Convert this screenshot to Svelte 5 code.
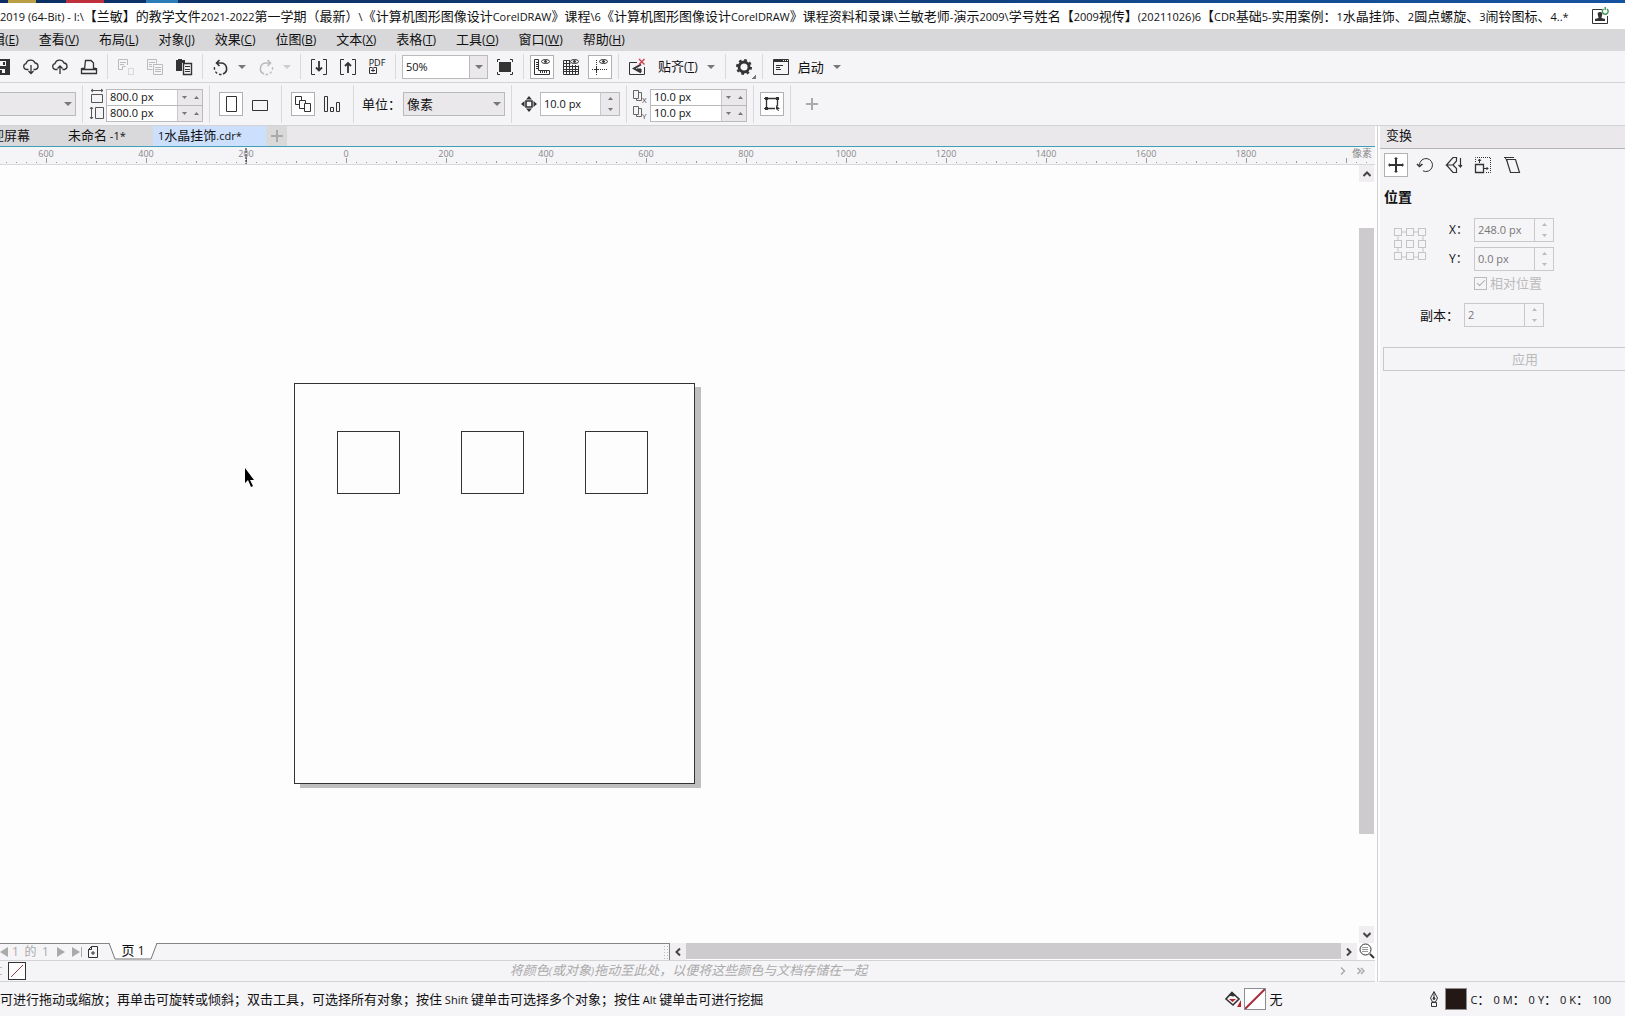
<script>
  const title =
    "2019 (64-Bit) - I:\\【兰敏】的教学文件2021-2022第一学期（最新）\\《计算机图形图像设计CorelDRAW》课程\\6《计算机图形图像设计CorelDRAW》课程资料和录课\\兰敏老师-演示2009\\学号姓名【2009视传】(20211026)6【CDR基础5-实用案例：1水晶挂饰、2圆点螺旋、3闹铃图标、4..*";

  const menus = [
    ["编辑", "E"],
    ["查看", "V"],
    ["布局", "L"],
    ["对象", "J"],
    ["效果", "C"],
    ["位图", "B"],
    ["文本", "X"],
    ["表格", "T"],
    ["工具", "O"],
    ["窗口", "W"],
    ["帮助", "H"]
  ];

  // every icon lives on a 16x16 grid
  const icons = {
    save: '<path fill="currentColor" stroke="none" d="M0 0h16v16H0z"/><path stroke="none" fill="#f5f4f7" d="M4 2h8v5H4zM5 10h6v4H5z"/><path stroke="none" fill="currentColor" d="M9 3h2v3H9zM6 11h2v3H6z"/>',
    cloudDown:
      '<path d="M5.5 10.5H3.5a3 3 0 0 1-.5-5.9A4.8 4.8 0 0 1 12 4a3.3 3.3 0 0 1 .5 6.500H10.500M8 6v8.500M5.500 12 8 14.500 10.500 12" stroke-width="1.3"/>',
    cloudUp:
      '<path d="M5.500 10.500H3.500a3 3 0 0 1-.5-5.900A4.800 4.800 0 0 1 12 4a3.300 3.300 0 0 1 .5 6.500H10.500M8 15V7M5.500 9.500 8 7 10.500 9.500" stroke-width="1.3"/>',
    print:
      '<path d="M3.500 10.500 4.500 1.500h5.500l2.500 2.500v6.500M.5 9v5.500h15V9M.5 10.500h15M1 9.500h2M13 9.500h2" stroke-width="1.3"/>',
    cut: '<path d="M9.500 6V.5h-9v10h4v-3h3M2 3.500h6M2 5.500h4"/><path stroke-dasharray="1 1" d="M10.500 9.500h5v6h-5z"/>',
    copy: '<path d="M5.500 10.500h-5V.5h9v4M2 3.500h6M2 5.500h3M2 7.500h3M6.500 5.500h9v10h-9zM8 8.500h6M8 10.500h6M8 12.500h6"/>',
    paste:
      '<path fill="currentColor" stroke="none" d="M0 1h2V0h4v1h3v3H6v8H0z"/><path fill="#f5f4f7" stroke-width="1.400" d="M7.500 4.500h8v11h-8z"/><path d="M9 7.500h5M9 10.500h5M9 12.500h5"/>',
    undo: '<path d="M3.500 4H8a5.700 5.700 0 0 1 2 11M6.500 1l-3 3 3 3" stroke-width="1.600"/><path d="M8.500 15.500A6.500 6.500 0 0 1 1.500 8" stroke-width="1.400" stroke-dasharray="2.500 2"/>',
    redo: '<path d="M12.500 4H8a5.700 5.700 0 0 0-2 11M9.500 1l3 3-3 3" stroke-width="1.600"/><path d="M7.500 15.500A6.500 6.500 0 0 0 14.500 8" stroke-width="1.400" stroke-dasharray="2.500 2"/>',
    import:
      '<path d="M4 .5H.5v15H4M12 .5h3.500v15H12"/><path d="M8 2v10M5 8.500l3 3 3-3" stroke-width="1.800"/>',
    export:
      '<path d="M4 .5H.5v15H4M12 .5h3.500v15H12"/><path d="M8 14V4M5 7l3-3 3 3" stroke-width="1.800"/>',
    full: '<path fill="currentColor" stroke="none" d="M2 3h12v10H2z"/><path d="M3 .5H.5V3M13 .5h2.500V3M3 15.500H.5V13M13 15.500h2.500V13"/>',
    ruler:
      '<path d="M.5.5h4v11h11v4H.5zM2 3.500h2M2 5.500h2M2 7.500h2M2 9.500h2M6.500 12v2M8.500 12v2M10.500 12v2M12.500 12v2"/><ellipse cx="11.500" cy="2.500" rx="4" ry="2"/><circle cx="11.500" cy="2.500" r="1" fill="currentColor"/>',
    grid: '<path d="M.5 1.500v14h15v-9M.5 4.500h7M.5 1.500h6M3.500 1v14M6.500 1v14M9.500 6v9M12.500 6v9M.5 7.500h15M.5 10.500h15M.5 12.500h15"/><ellipse cx="11.500" cy="2.500" rx="4" ry="2"/><circle cx="11.500" cy="2.500" r="1" fill="currentColor"/>',
    guide:
      '<path stroke-dasharray="1 1" d="M4.500 1v15M0 10.500h16"/><path d="M2 10.500h5M4.500 8v5"/><ellipse cx="11.500" cy="2.500" rx="4" ry="2"/><circle cx="11.500" cy="2.500" r="1" fill="currentColor"/>',
    snap: '<path d="M8 3.500H.5v12h15V8" /><path d="M12 5.500 5 9.500l7 4" stroke-width="2"/><path d="M12 10v3l-4-3z" fill="currentColor"/><path stroke="#d33b47" stroke-width="1.400" d="m10 0 5.500 5.500M15.500 0 10 5.500"/>',
    gear: '<circle cx="8" cy="8" r="5" stroke-width="2.800"/><circle cx="8" cy="8" r="7" stroke-width="2" stroke-dasharray="2.700 2.800"/>',
    launch:
      '<path d="M.5.5h15v15H.5z"/><path stroke-width="2" d="M0 2h16"/><path stroke="#f5f4f7" d="M10 1.500h1M12 1.500h1M14 1.500h1"/><path d="M3 6.500h7M3 8.500h4M3 10.500h5"/>',
    widthDim: '<path d="M2 1.500h12M4 0 2 1.500 4 3M12 0l2 1.500L12 3M2.500 5.500h11v8h-11z" stroke="#555"/>',
    heightDim: '<path d="M2.500 2v12M1 4l1.500-2L4 4M1 12l1.500 2L4 12M6.500 2.500h8v11h-8z" stroke="#555"/>',
    portrait: '<path d="M3.500.5h10v15h-10z"/>',
    landscape: '<path d="M.5 4.500h15v10H.5z"/>',
    pages: '<path d="M.5.5h6v8h-6z"/><path fill="#fff" d="M4.500 4.500h6v8h-6z"/><path fill="#fff" d="M9.500 7.500h6v8h-6z"/>',
    bars: '<path d="M.5.5h3v15h-3zM6.500 11.500h3v4h-3zM12.500 6.500h3v9h-3z"/>',
    nudge:
      '<path stroke-width="1.600" d="M5 5h6v6H5z"/><path fill="currentColor" stroke="none" d="M8 0l3 3.500H5zM8 16l3-3.500H5zM0 8l3.500-3v6zM16 8l-3.500-3v6z"/>',
    box: '<path stroke-width="1.300" d="M3 2.500h10M2.500 3v10M13.500 3v7M3 12.500h8"/><path fill="currentColor" stroke="none" d="M1 1h3v3H1zM12 1h3v3h-3zM1 11h3v3H1z"/><path fill="currentColor" stroke="none" d="M12 9l4 4h-2l1 2h-1l-1-2-1 1z"/><path d="M0 2.500h2M0 12.500h2"/>',
    plus: '<path stroke="#aaa" stroke-width="2" d="M8 2v12M2 8h12"/>',
    move: '<path stroke-width="2" d="M8 1v14M1 8h14"/><path fill="currentColor" stroke="none" d="m8 0 2 2H6zM8 16l2-2H6zM0 8l2-2v4zM16 8l-2-2v4z"/>',
    rotate: '<path d="M2.500 8A6.500 6.500 0 1 1 6 13.800"/><path d="M0 7l2.500 2.500L5.500 7" stroke-width="1.600"/>',
    mirror:
      '<path stroke-width="1.200" d="M10.500.5H7L.5 8H7l3.500-4zM.5 8 7 15.500h3.500v-4L7 8M14.500 1v9M12.500 8l2 2 1.500-2"/>',
    scale:
      '<path stroke-width="1.300" d="M.5 7.500h8v8h-8z"/><path stroke-dasharray="1 1" d="M.5 5V.5h15v15H11"/><path d="M4.500 6V2M3 4l1.500-2L6 4M9 11.500h4M11.500 10l1.500 1.500-1.500 1.500"/>',
    skew: '<path stroke-width="1.200" d="M2.500 2.500h9l4 13h-9z"/><path d="M0 .5h10M1 .5l2 3" />',
    addPage: '<path d="M6.500 2.500h6v11h-9v-8zM6.500 2.500v3h-3M8 7v4M6 9h4"/>',
    zoomFit: '<circle cx="6.500" cy="6.500" r="5.500"/><path stroke-dasharray="1 1" d="M3.500 4.500h6M3.500 6.500h6M3.500 8.500h6"/><path stroke-width="2" d="m11 11 4 4"/>',
    fill: '<path stroke-width="1.600" d="M7 1.500 14 8l-6 6L1 8z"/><path fill="currentColor" stroke="none" d="M7 1l4 3.500-3 1-4-1z"/><path stroke="none" fill="#b8232f" d="M4 8h7l-3.500 3zM12 16l4-7v7z"/>',
    pen: '<path d="M8 .5 4.500 7l2 4h3l2-4zM8 1v6M5.500 11.500h5v4h-5z"/><circle cx="8" cy="7.500" r="1" fill="currentColor"/>',
    user: '<path d="M10 1.500H.5v14h15V8"/><path fill="currentColor" stroke="none" d="M8 4c2 0 3 1.500 2 3.500L9.500 10l3.500 1v2H3v-2l3.500-1L6 7.500C5 5.500 6 4 8 4z"/><path stroke="#3e9a55" stroke-width="1.400" d="M11.500 1a2.900 2.900 0 1 0 3.500 0M13.200-1v3"/>'
  };

  // one major tick for each 200 units
  const majors = Array.from({ length: 22 }, (_, i) => ({ x: 46 + i * 100, n: Math.abs(i * 200 - 600) }));
  const minors = Array.from({ length: 220 }, (_, i) => i * 10 + 6);

  let zoom = "50%";
  let units = "像素";
  let pageW = "800.0 px";
  let pageH = "800.0 px";
  let nudge = "10.0 px";
  let dupX = "10.0 px";
  let dupY = "10.0 px";
  let inks = [["C", 0], ["M", 0], ["Y", 0], ["K", 100]];

  // latin letters are set smaller than the chinese ones
  let runs = text => text.match(/[\x20-\x7e]+|[^\x20-\x7e]+/g);
</script>

{#snippet icon(name)}
  <svg class="icon" viewBox="0 0 16 16" aria-hidden="true">{@html icons[name]}</svg>
{/snippet}

{#snippet mixed(text)}
  {#each runs(text) as run}{#if run.charCodeAt(0) < 127}<span class="latin">{run}</span>{:else}{run}{/if}{/each}
{/snippet}

{#snippet tool(name, label, on, off)}
  <button class="tool" class:on disabled={off} aria-label={label}>{@render icon(name)}</button>
{/snippet}

{#snippet caret(off)}
  <button class="caret" disabled={off} aria-label="展开"><svg viewBox="0 0 8 4"><path d="M0 0h8L4 4z" /></svg></button>
{/snippet}

{#snippet up()}
  <button aria-label="增加"><svg viewBox="0 0 5 3"><path d="M0 3h5L2.500 0z" /></svg></button>
{/snippet}

{#snippet down()}
  <button aria-label="减少"><svg viewBox="0 0 5 3"><path d="M0 0h5L2.500 3z" /></svg></button>
{/snippet}

<div class="app">
  <div class="desktop"><i class="yellow"></i><i class="red"></i><i class="blue"></i></div>

  <header class="title">
    <span>{@render mixed(title)}</span>
    <button class="account" aria-label="登录">{@render icon("user")}</button>
  </header>

  <nav class="menu">
    {#each menus as [name, key]}
      <button>{name}<span class="key">(<u>{key}</u>)</span></button>
    {/each}
  </nav>

  <div class="bar standard">
    {@render tool("save", "保存")}
    {@render tool("cloudDown", "下载")}
    {@render tool("cloudUp", "上传")}
    {@render tool("print", "打印")}
    <hr />
    {@render tool("cut", "剪切", false, true)}
    {@render tool("copy", "复制", false, true)}
    {@render tool("paste", "粘贴")}
    <hr />
    <div class="split">{@render tool("undo", "撤消")}{@render caret()}</div>
    <div class="split">{@render tool("redo", "重做", false, true)}{@render caret(true)}</div>
    <hr />
    {@render tool("import", "导入")}
    {@render tool("export", "导出")}
    <button class="tool pdf"><span>PDF</span><svg viewBox="0 0 8 7"><path d="M3 .5H.5v6h7v-6H5M4 5V0M2 3.500h4" /></svg></button>
    <hr />
    <div class="field zoom">
      <input aria-label="缩放级别" bind:value={zoom} />
      {@render caret()}
    </div>
    {@render tool("full", "全屏预览")}
    <hr />
    {@render tool("ruler", "显示标尺", true)}
    {@render tool("grid", "显示网格")}
    {@render tool("guide", "显示辅助线", true)}
    <hr />
    {@render tool("snap", "关闭贴齐")}
    <div class="split">
      <button class="text">贴齐<span class="key">(<u>T</u>)</span></button>{@render caret()}
    </div>
    <hr />
    <div class="gear">{@render tool("gear", "选项")}</div>
    <hr />
    <div class="split">{@render tool("launch", "启动")}<button class="text">启动</button>{@render caret()}</div>
  </div>

  <div class="bar property">
    <div class="drop size">
      <select aria-label="页面大小"><option></option></select>
      <svg viewBox="0 0 8 4"><path d="M0 0h8L4 4z" /></svg>
    </div>
    <hr />
    <div class="pair">
      {@render icon("widthDim")}
      <div class="field"><input aria-label="页面宽度" bind:value={pageW} /><div class="spin side">{@render down()}{@render up()}</div></div>
      {@render icon("heightDim")}
      <div class="field"><input aria-label="页面高度" bind:value={pageH} /><div class="spin side">{@render down()}{@render up()}</div></div>
    </div>
    <hr />
    <div class="group">{@render tool("portrait", "纵向", true)}{@render tool("landscape", "横向")}</div>
    <hr />
    <div class="group">{@render tool("pages", "所有页面", true)}{@render tool("bars", "当前页面")}</div>
    <hr />
    <label class="units">
      <span>单位：</span>
      <div class="drop">
        <select bind:value={units}><option>像素</option><option>毫米</option></select>
        <svg viewBox="0 0 8 4"><path d="M0 0h8L4 4z" /></svg>
      </div>
    </label>
    <hr />
    <div class="nudge">
      {@render icon("nudge")}
      <div class="field"><input aria-label="微调距离" bind:value={nudge} /><div class="spin">{@render up()}{@render down()}</div></div>
    </div>
    <hr />
    <div class="pair">
      <svg class="icon dup" viewBox="0 0 16 16"><path d="M.5 1.500h5v8h-5zM3.500 9.500v2h5v-8h-3" /><text x="9" y="14">X</text></svg>
      <div class="field"><input aria-label="再制距离 X" bind:value={dupX} /><div class="spin side">{@render down()}{@render up()}</div></div>
      <svg class="icon dup" viewBox="0 0 16 16"><path d="M.5 1.500h5v8h-5zM3.500 9.500v2h5v-8h-3" /><text x="9" y="14">Y</text></svg>
      <div class="field"><input aria-label="再制距离 Y" bind:value={dupY} /><div class="spin side">{@render down()}{@render up()}</div></div>
    </div>
    <hr />
    {@render tool("box", "将对象视为已填充", true)}
    <hr />
    <div class="group">{@render tool("plus", "自定义")}</div>
  </div>

  <div class="work">
    <main>
      <div class="tabs">
        <button class="tab">欢迎屏幕</button>
        <button class="tab">{@render mixed("未命名 -1*")}</button>
        <button class="tab active">{@render mixed("1水晶挂饰.cdr*")}</button>
        <button class="add" aria-label="新建文档"><svg viewBox="0 0 12 12"><path d="M6 0v12M0 6h12" /></svg></button>
      </div>

      <div class="ruler">
        <svg>
          {#each minors as x, i}
            <line x1={x + 0.5} x2={x + 0.5} y1={i % 5 == 4 ? 14 : 15} y2="16" />
          {/each}
          {#each majors as m}
            <line x1={m.x + 0.5} x2={m.x + 0.5} y1="11" y2="16" />
            {#if m.n < 2000}<text x={m.x} y="10">{m.n}</text>{/if}
          {/each}
          <path class="mark" d="M246 1v16" />
        </svg>
        <span>像素</span>
      </div>

      <div class="view">
        <svg class="canvas">
          <path class="shadow" d="M695 222h6v401H300v-5h395z" />
          <rect x="294.5" y="218.5" width="400" height="400" />
          <rect x="337.5" y="266.5" width="62" height="62" />
          <rect x="461.5" y="266.5" width="62" height="62" />
          <rect x="585.5" y="266.5" width="62" height="62" />
          <path class="pointer" d="M245 303v15l3-3 3 7 2-1-3-6h4z" />
        </svg>
        <div class="vscroll">
          <button aria-label="向上滚动"><svg viewBox="0 0 8 6"><path d="M0.500 5 4 1.500 7.500 5" /></svg></button>
          <div class="track"><div class="thumb"></div></div>
          <button aria-label="向下滚动"><svg viewBox="0 0 8 6"><path d="M0.500 1 4 4.500 7.500 1" /></svg></button>
        </div>
      </div>

      <div class="foot">
        <div class="pager">
          <button aria-label="上一页"><svg viewBox="0 0 8 10"><path d="M8 0v10L0 5z" /></svg></button>
          <span class="count">1</span><span class="count">的</span><span class="count">1</span>
          <button aria-label="下一页"><svg viewBox="0 0 8 10"><path d="M0 0v10l8-5z" /></svg></button>
          <button aria-label="末页"><svg class="last" viewBox="0 0 10 10"><path d="M0 0v10l8-5zM9 0h1v10H9z" /></svg></button>
          <button class="new" aria-label="添加页">{@render icon("addPage")}</button>
          <button class="page">
            <svg viewBox="0 0 48 17"><path d="M0 0 6 16h36l6-16" /></svg>
            <span>{@render mixed("页 1")}</span>
          </button>
          <i class="grip"></i>
        </div>
        <div class="hscroll">
          <button aria-label="向左滚动"><svg viewBox="0 0 6 8"><path d="M5 .5 1.500 4 5 7.500" /></svg></button>
          <div class="thumb"></div>
          <button aria-label="向右滚动"><svg viewBox="0 0 6 8"><path d="M1 .5 4.500 4 1 7.500" /></svg></button>
        </div>
        <button class="fit" aria-label="导航器">{@render icon("zoomFit")}</button>
      </div>

      <div class="palette">
        <i class="dots"></i>
        <button class="none" aria-label="无色"><svg viewBox="0 0 14 14"><path d="M1 13 13 1" /></svg></button>
        <em>{@render mixed("将颜色(或对象)拖动至此处，以便将这些颜色与文档存储在一起")}</em>
        <button class="more" aria-label="向右"><svg viewBox="0 0 6 8"><path d="M1 .5 4.500 4 1 7.500" /></svg></button>
        <button class="more" aria-label="更多"><svg viewBox="0 0 8 8"><path d="M.5 1 3.500 4 .5 7M4 1l3 3-3 3" /></svg></button>
      </div>
    </main>

    <aside>
      <h2>变换</h2>
      <div class="modes">
        {@render tool("move", "位置", true)}
        {@render tool("rotate", "旋转")}
        {@render tool("mirror", "缩放和镜像")}
        {@render tool("scale", "大小")}
        {@render tool("skew", "倾斜")}
      </div>
      <h3>位置</h3>
      <div class="position">
        <svg class="anchor" viewBox="0 0 33 33">
          <path d="M8 4h5M20 4h5M8 29h5M20 29h5M4 8v5M4 20v5M29 8v5M29 20v5" />
          {#each [0, 1, 2] as r}
            {#each [0, 1, 2] as c}
              <rect x={c * 12 + 0.5} y={r * 12 + 0.5} width="7" height="7" />
            {/each}
          {/each}
        </svg>
        <div class="rows">
          <label><span>X：</span><div class="field"><input value="248.0 px" disabled /><div class="spin">{@render up()}{@render down()}</div></div></label>
          <label><span>Y：</span><div class="field"><input value="0.0 px" disabled /><div class="spin">{@render up()}{@render down()}</div></div></label>
          <label class="relative"><input type="checkbox" checked disabled />相对位置</label>
        </div>
      </div>
      <label class="copies"><span>副本：</span><div class="field"><input value="2" disabled /><div class="spin">{@render up()}{@render down()}</div></div></label>
      <button class="apply" disabled>应用</button>
    </aside>
  </div>

  <footer>
    <p>{@render mixed("可进行拖动或缩放；再单击可旋转或倾斜；双击工具，可选择所有对象；按住 Shift 键单击可选择多个对象；按住 Alt 键单击可进行挖掘")}</p>
    <div class="paint">
      {@render icon("fill")}
      <i class="chip"><svg viewBox="0 0 20 20"><path d="M0 20 20 0" /></svg></i>
      <span>无</span>
    </div>
    <div class="paint outline">
      {@render icon("pen")}
      <i class="chip dark"></i>
      {#each inks as [ink, value]}
        <span class="ink">{@render mixed(ink + "：")}<span class="latin">{value}</span></span>
      {/each}
    </div>
  </footer>
</div>

<style>
  :global(body) {
    margin: 0;
  }
  .app {
    min-height: 100vh;
    display: flex;
    flex-direction: column;
    overflow: hidden;
    background: #f5f4f7;
    color: #111;
    font-family: "Open Sans", "Noto Sans CJK SC", sans-serif;
    font-size: 13px;
    line-height: 16px;
  }
  button,
  input,
  select {
    margin: 0;
    padding: 0;
    border: 0;
    background: none;
    color: inherit;
    font: inherit;
  }
  .latin {
    font-size: 11px;
  }
  .key {
    font-size: 12px;
  }
  .icon {
    width: 16px;
    height: 16px;
    flex: none;
    fill: none;
    stroke: currentColor;
    color: #333;
    overflow: visible;
  }

  .desktop {
    height: 3px;
    flex: none;
    display: flex;
    background: linear-gradient(90deg, #0c2f63, #0f3c76 50%, #134d97 80%, #16529f);
  }
  .desktop i {
    width: 28px;
    margin-left: 8px;
    background: #b9a045;
  }
  .desktop .red {
    width: 38px;
    margin-left: 30px;
    background: #c0303c;
  }
  .desktop .blue {
    width: 32px;
    margin-left: 42px;
    background: #2c7cb8;
  }
  .title {
    height: 26px;
    display: flex;
    align-items: center;
    justify-content: space-between;
    padding-right: 17px;
    background: #fff;
    white-space: nowrap;
  }
  .account {
    display: flex;
  }
  .menu {
    height: 22px;
    box-sizing: border-box;
    display: flex;
    margin-left: -31px;
    padding-bottom: 2px;
    background: #d8d8da;
  }
  .menu button {
    padding: 0 10px;
    white-space: nowrap;
  }

  .bar {
    display: flex;
    align-items: center;
    gap: 5px;
    border-bottom: 1px solid #d3d3d6;
    white-space: nowrap;
  }
  .standard {
    height: 31px;
    margin-left: -10px;
  }
  .property {
    height: 42px;
  }
  hr {
    width: 1px;
    align-self: stretch;
    margin: 3px 1px;
    border: 0;
    background: #d9d8db;
    flex: none;
  }
  .property hr {
    margin: 2px 1px;
  }
  .tool {
    width: 24px;
    height: 24px;
    flex: none;
    box-sizing: border-box;
    display: flex;
    align-items: center;
    justify-content: center;
  }
  .tool.on {
    border: 1px solid #b1b0b3;
    background: #fff;
  }
  .tool:disabled .icon {
    color: #bbb;
  }
  .split {
    display: flex;
    gap: 1px;
  }
  .text {
    padding: 0 5px 0 4px;
  }
  .caret {
    width: 15px;
    display: flex;
    align-items: center;
    justify-content: center;
  }
  .caret svg,
  .drop svg {
    width: 8px;
    height: 4px;
    fill: #777;
  }
  .caret:disabled svg {
    fill: #ccc;
  }
  .pdf {
    flex-direction: column;
    font-size: 9px;
    line-height: 8px;
  }
  .pdf svg {
    width: 8px;
    height: 7px;
    margin-right: 8px;
    fill: none;
    stroke: #333;
  }
  .gear {
    background: linear-gradient(135deg, transparent 50%, #777 50%) right bottom / 4px 4px no-repeat;
  }

  .field {
    height: 24px;
    width: 80px;
    box-sizing: border-box;
    display: flex;
    border: 1px solid #bab9bc;
    background: #fff;
  }
  .field input {
    flex: 1;
    min-width: 0;
    padding: 0 3px;
    font-size: 11px;
  }
  .field.zoom {
    width: 86px;
  }
  .field .caret {
    width: 18px;
    border-left: 1px solid #bab9bc;
    background: #ebe8ec;
  }
  .spin {
    width: 18px;
    flex: none;
    display: flex;
    flex-direction: column;
    border-left: 1px solid #c8c7ca;
    background: #ebe8ec;
  }
  .spin.side {
    width: 24px;
    flex-direction: row;
  }
  .spin button {
    flex: 1;
    display: flex;
    align-items: center;
    justify-content: center;
  }
  .spin svg {
    width: 5px;
    height: 3px;
    fill: #777;
  }
  .drop {
    display: grid;
    width: 102px;
    height: 24px;
    box-sizing: border-box;
    border: 1px solid #bab9bc;
    background: #ebe8ec;
  }
  .drop select,
  .drop svg {
    grid-area: 1 / 1;
  }
  .drop select {
    appearance: none;
    padding: 0 3px;
    outline: none;
  }
  .drop svg {
    align-self: center;
    justify-self: end;
    margin-right: 3px;
    pointer-events: none;
  }
  .drop.size {
    width: 76px;
    border-left: 0;
  }
  .pair {
    display: grid;
    grid-template-columns: 14px 97px;
    grid-template-rows: 16px 16px;
    column-gap: 3px;
    align-items: start;
    padding-top: 1px;
  }
  .pair .field {
    width: 97px;
    height: 17px;
  }
  .dup {
    stroke: #666;
  }
  .dup text {
    stroke: none;
    fill: #444;
    font-size: 8px;
  }
  .group {
    display: flex;
    gap: 5px;
    padding: 0 3px;
  }
  .units {
    display: flex;
    align-items: center;
    gap: 2px;
    padding-left: 2px;
  }
  .nudge {
    display: flex;
    align-items: center;
    gap: 3px;
    padding-left: 3px;
  }

  .work {
    flex: 1;
    display: flex;
    min-height: 0;
  }
  main {
    flex: 1;
    min-width: 0;
    display: flex;
    flex-direction: column;
  }
  .tabs {
    height: 20px;
    display: flex;
    background: #ebe8ec;
    border-bottom: 1px solid #3f9fb4;
    overflow: hidden;
  }
  .tab {
    width: 90px;
    padding: 0 0 2px 5px;
    text-align: left;
    white-space: nowrap;
    background: #d9d8da;
  }
  .tab:first-child {
    margin-left: -27px;
  }
  .tab.active {
    width: 113px;
    background: #cce0fd;
  }
  .add {
    width: 21px;
    background: #d9d9da;
  }
  .add svg {
    width: 12px;
    height: 12px;
    display: block;
    margin: auto;
    stroke: #aaa;
    stroke-width: 2;
  }
  .ruler {
    height: 17px;
    display: flex;
    position: relative;
    border-bottom: 1px solid #d9d9db;
    color: #888;
  }
  .ruler svg {
    width: 100%;
    height: 17px;
    stroke: #999;
  }
  .ruler text {
    stroke: none;
    fill: #888;
    font-size: 9px;
    text-anchor: middle;
  }
  .ruler .mark {
    stroke: #111;
    stroke-dasharray: 2 1;
  }
  .ruler span {
    position: absolute;
    right: 3px;
    top: 0;
    font-size: 10px;
    line-height: 12px;
    background: #f5f4f7;
  }
  .view {
    flex: 1;
    display: flex;
    background: #fdfdfd;
  }
  .canvas {
    flex: 1;
    min-width: 0;
    height: 100%;
    fill: none;
    stroke: #333;
  }
  .shadow {
    fill: #bfbfbf;
    stroke: none;
  }
  .pointer {
    fill: #000;
    stroke: none;
  }
  .vscroll {
    width: 15px;
    margin-right: 1px;
    display: flex;
    flex-direction: column;
  }
  .vscroll button,
  .hscroll button {
    width: 16px;
    height: 17px;
    flex: none;
    display: flex;
    align-items: center;
    justify-content: center;
    background: #f0eef1;
  }
  .vscroll button {
    width: 15px;
  }
  .vscroll svg {
    width: 8px;
    height: 6px;
  }
  .hscroll svg {
    width: 6px;
    height: 8px;
  }
  .vscroll svg,
  .hscroll svg {
    fill: none;
    stroke: #444;
    stroke-width: 2;
  }
  .track {
    flex: 1;
    display: flex;
    flex-direction: column;
  }
  .track::before {
    content: "";
    flex: 46;
  }
  .track::after {
    content: "";
    flex: 92;
  }
  .track .thumb {
    flex: 606;
    background: #cdcbce;
  }
  .foot {
    height: 17px;
    display: flex;
    border-bottom: 1px solid #d3d3d6;
  }
  .pager {
    flex: 0 0 670px;
    box-sizing: border-box;
    display: flex;
    align-items: center;
    border-top: 1px solid #858587;
    border-right: 1px solid #858587;
    color: #aaa;
  }
  .pager button {
    width: 16px;
    display: flex;
    justify-content: center;
  }
  .pager button:first-child {
    width: 8px;
  }
  .pager svg {
    width: 8px;
    height: 10px;
    fill: #aaa;
  }
  .pager .last {
    width: 10px;
  }
  .pager .icon {
    width: 16px;
    height: 16px;
    fill: none;
  }
  .count {
    width: 15px;
    text-align: center;
    font-size: 12px;
  }
  .pager .page {
    width: 48px;
    height: 17px;
    margin: -1px 0 0 8px;
    display: grid;
    color: #111;
  }
  .page svg,
  .page span {
    grid-area: 1 / 1;
  }
  .page > span {
    line-height: 14px;
  }
  .page :global(.latin) {
    font-size: 12px;
  }
  .pager .page svg {
    width: 48px;
    height: 17px;
    fill: #fdfdfd;
    stroke: #777;
  }
  .grip {
    width: 6px;
    height: 14px;
    margin-left: auto;
    background: radial-gradient(#bbb 1px, transparent 1px) 0 0 / 3px 3px;
  }
  .hscroll {
    flex: 1;
    display: flex;
    padding-right: 2px;
    background: #fdfdfd;
  }
  .hscroll .thumb {
    flex: 1;
    height: 16px;
    background: #cdcbce;
  }
  .fit {
    width: 16px;
    background: #fdfdfd;
  }
  .palette {
    height: 20px;
    display: flex;
    align-items: center;
    border-bottom: 1px solid #d3d3d6;
    color: #aaa;
  }
  .dots {
    width: 2px;
    height: 8px;
    margin-right: 6px;
    border-top: 1px solid #bbb;
    border-bottom: 1px solid #bbb;
    box-sizing: border-box;
  }
  .none {
    width: 18px;
    height: 18px;
    box-sizing: border-box;
    border: 1px solid #333;
    background: #fff;
  }
  .none svg {
    display: block;
    width: 14px;
    height: 14px;
    margin: auto;
    stroke: #a04048;
  }
  .palette em {
    flex: 1;
    padding: 0 0 2px 12px;
    text-align: center;
  }
  .more {
    width: 18px;
    display: flex;
  }
  .more svg {
    width: 8px;
    height: 8px;
    fill: none;
    stroke: #aaa;
    stroke-width: 1.5;
  }

  aside {
    width: 247px;
    flex: none;
    box-sizing: border-box;
    overflow: hidden;
    margin-left: 3px;
    border-left: 2px solid #fdfdfd;
    border-bottom: 1px solid #d3d3d6;
    box-shadow: -1px 0 #cfced1, -3px 0 #fdfdfd;
  }
  h2 {
    margin: 0;
    height: 22px;
    padding-left: 6px;
    background: #ebe8ec;
    border-bottom: 1px solid #b5b4b7;
    font-size: 13px;
    font-weight: normal;
    line-height: 18px;
  }
  .modes {
    display: flex;
    gap: 5px;
    padding: 4px;
  }
  h3 {
    margin: 8px 0 13px 4px;
    font-size: 14px;
    font-weight: bold;
    line-height: 16px;
  }
  .position {
    display: flex;
    gap: 22px;
    padding-left: 14px;
  }
  .anchor {
    width: 33px;
    height: 33px;
    margin-top: 10px;
    fill: none;
    stroke: #c4c4c6;
  }
  .rows {
    display: flex;
    flex-direction: column;
    gap: 5px;
  }
  .rows label,
  .copies {
    display: flex;
    align-items: center;
  }
  .rows span {
    width: 25px;
    font-size: 12px;
  }
  aside .field {
    background: none;
    border-color: #c9c8cb;
    color: #777;
  }
  aside .spin {
    background: none;
  }
  aside .spin svg {
    fill: #bbb;
  }
  .rows .relative {
    gap: 3px;
    padding-left: 25px;
    line-height: 14px;
    color: #bbb;
  }
  .relative input {
    appearance: none;
    width: 13px;
    height: 13px;
    display: grid;
    place-items: center;
    border: 1px solid #bbb;
    box-sizing: border-box;
  }
  .relative input::after {
    content: "";
    width: 7px;
    height: 3px;
    margin-bottom: 3px;
    border: solid #aaa;
    border-width: 0 0 1px 1px;
    transform: rotate(-45deg);
  }
  .copies {
    margin: 13px 0 20px 40px;
    gap: 5px;
  }
  .apply {
    width: 284px;
    height: 24px;
    margin-left: 3px;
    border: 1px solid #c9c8cb;
    color: #bbb;
  }

  footer {
    height: 34px;
    display: flex;
    align-items: center;
    padding-right: 14px;
    white-space: nowrap;
  }
  footer p {
    margin: 0;
    flex: 1;
  }
  .paint {
    display: flex;
    align-items: center;
    gap: 3px;
  }
  .outline {
    margin-left: 144px;
  }
  .chip {
    width: 22px;
    height: 22px;
    box-sizing: border-box;
    border: 1px solid #8d8d8f;
    background: #fff;
  }
  .chip svg {
    display: block;
    stroke: #a8303c;
    stroke-width: 2;
  }
  .dark {
    background: #231815;
  }
  .ink .latin:last-child {
    margin-left: 3px;
  }
</style>
